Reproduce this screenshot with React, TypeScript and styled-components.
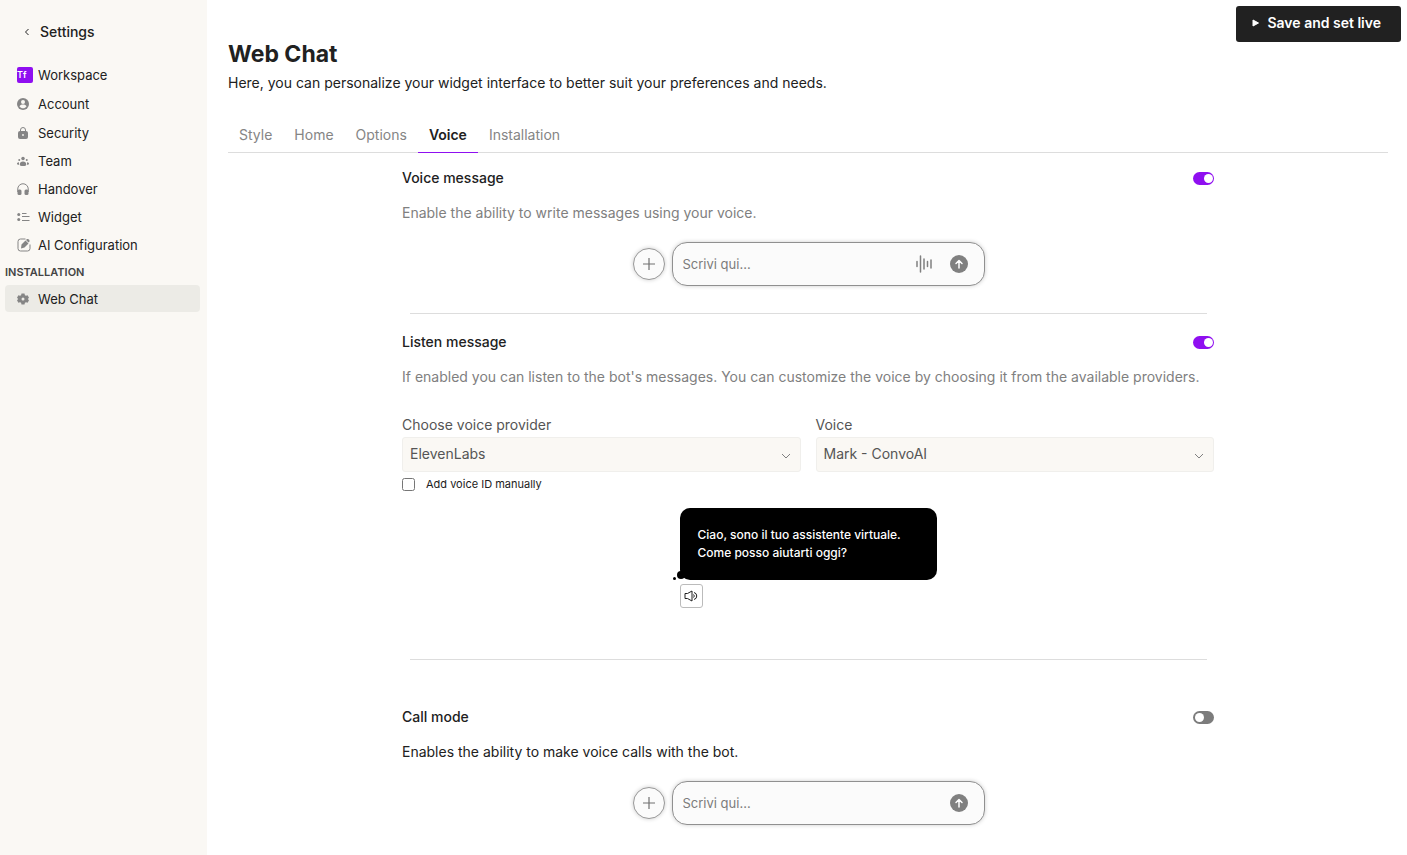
import React from "react";
import styled, { createGlobalStyle, css } from "styled-components";

const GlobalStyle = createGlobalStyle`
  *, *::before, *::after { box-sizing: border-box; }
  body {
    margin: 0;
    background: #fff;
    color: #212121;
    font-family: Inter, "Liberation Sans", sans-serif;
    font-size: 14px;
    line-height: 20px;
  }
  button, input, select { font: inherit; color: inherit; }
  h1, h2, p { margin: 0; }
`;

const Page = styled.div`
  display: flex;
  min-height: 100vh;
`;

const Sidebar = styled.aside`
  flex: 0 0 207px;
  padding: 22px 7px 20px 5px;
  background: #faf8f4;
`;

const BackLink = styled.a`
  display: flex;
  align-items: center;
  gap: 10px;
  margin-bottom: 18px;
  padding-left: 19px;
  color: #212121;
  font-weight: 500;
  text-decoration: none;
`;

const NavGroup = styled.nav`
  display: flex;
  flex-direction: column;
`;

const NavItem = styled.a<{ $tall?: boolean; $active?: boolean }>`
  display: grid;
  grid-template-columns: 16px 1fr;
  align-items: center;
  column-gap: 5px;
  height: ${(p) => (p.$tall ? 29 : p.$active ? 27 : 28)}px;
  padding-left: 12px;
  border-radius: 4px;
  background: ${(p) => (p.$active ? "#ecebe6" : "transparent")};
  color: #212121;
  font-size: 13px;
  text-decoration: none;

  svg { display: block; color: #858585; }
`;

const WorkspaceBadge = styled.span`
  width: 16px;
  height: 16px;
  border-radius: 2px;
  background: #8f0ff0;
  color: #fff;
  font-size: 9px;
  font-weight: 600;
  line-height: 16px;
`;

const GroupTitle = styled.h2`
  margin: 4px 0;
  color: #444;
  font-size: 11px;
  font-weight: 600;
  line-height: 18px;
`;

const Main = styled.main`
  flex: 1;
  min-width: 0;
`;

const Header = styled.header`
  display: flex;
  align-items: flex-start;
  justify-content: space-between;
  padding: 6px 6px 0 21px;
`;

const Heading = styled.div`
  padding-top: 32px;
`;

const Title = styled.h1`
  font-size: 23px;
  font-weight: 700;
  line-height: 32px;
`;

const Lead = styled.p`
  margin-top: 3px;
`;

const SaveButton = styled.button`
  display: flex;
  align-items: center;
  gap: 7px;
  height: 36px;
  padding: 0 20px 2px 15px;
  border: 0;
  border-radius: 3px;
  background: #212121;
  color: #fff;
  font-weight: 600;
`;

const Tabs = styled.nav`
  display: flex;
  margin: 25px 19px 0 21px;
  border-bottom: 1px solid #ddd;
`;

const Tab = styled.a<{ $active?: boolean }>`
  margin-bottom: -1px;
  padding: 7px 11px;
  color: #858585;
  text-decoration: none;
  ${(p) =>
    p.$active &&
    css`
      border-bottom: 1px solid #8f0ff0;
      color: #212121;
      font-weight: 600;
    `}
`;

const Content = styled.div`
  width: 70%;
  margin: 0 auto;
`;

const ContentFrame = styled.div`
  padding: 0 19px 30px 21px;
`;

const Section = styled.section<{ $top: number }>`
  padding-top: ${(p) => p.$top}px;
`;

const SectionHead = styled.div`
  display: flex;
  align-items: center;
  justify-content: space-between;
`;

const SectionTitle = styled.label`
  font-weight: 500;
`;

const Description = styled.p<{ $strong?: boolean }>`
  margin-top: 15px;
  color: ${(p) => (p.$strong ? "#212121" : "#808080")};
`;

const Switch = styled.input`
  appearance: none;
  display: flex;
  align-items: center;
  width: 21px;
  height: 13px;
  margin: 0;
  padding: 0 2px;
  border-radius: 7px;
  background: #7c7c7c;

  &::before {
    content: "";
    width: 9px;
    height: 9px;
    border-radius: 50%;
    background: #fff;
  }
  &:checked {
    justify-content: flex-end;
    padding-right: 1px;
    background: #8f0ff0;
  }
`;

const Divider = styled.hr`
  height: 1px;
  margin: 0 7px 0 8px;
  border: 0;
  background: #ddd;
`;

const Composer = styled.form`
  display: flex;
  align-items: center;
  justify-content: center;
  gap: 7px;
  margin: 19px 0 27px;
  padding-left: 1px;
`;

const RoundButton = styled.button`
  display: grid;
  place-items: center;
  width: 32px;
  height: 32px;
  padding: 0;
  border: 1px solid #999;
  border-radius: 50%;
  background: #fbfbfb;
  box-shadow: 0 0 4px rgba(0, 0, 0, 0.2);
  color: #707070;
`;

const Field = styled.div`
  display: flex;
  align-items: center;
  width: 313px;
  height: 44px;
  padding: 0 16px 0 10px;
  border: 1px solid #909090;
  border-radius: 15px;
  background: #fbfbfb;
  box-shadow: 0 0 4px rgba(0, 0, 0, 0.2);
`;

const FieldInput = styled.input`
  flex: 1;
  min-width: 0;
  padding: 0;
  border: 0;
  outline: 0;
  background: transparent;
  font-size: 13px;

  &::placeholder { color: #7c7c7c; opacity: 1; }
`;

const IconButton = styled.button`
  display: block;
  margin-left: 18px;
  padding: 0;
  border: 0;
  background: none;
  color: #808080;

  svg { display: block; }
`;

const SelectGrid = styled.div`
  display: grid;
  grid-template-columns: 1fr 1fr;
  gap: 15px;
  margin-top: 28px;
`;

const SelectLabel = styled.label`
  display: block;
  margin-bottom: 2px;
  color: #555;
`;

const SelectBox = styled.div`
  display: grid;
  align-items: center;

  > * { grid-area: 1 / 1; }
  svg {
    justify-self: end;
    margin: 2px 10px 0 0;
    color: #808080;
    pointer-events: none;
  }
`;

const SelectInput = styled.select`
  appearance: none;
  width: 100%;
  height: 35px;
  padding: 0 30px 1px 7px;
  border: 1px solid #f0efec;
  border-radius: 3px;
  background: #faf8f4;
  color: #555;
`;

const CheckRow = styled.label`
  display: flex;
  align-items: center;
  gap: 11px;
  margin-top: 4px;
  font-size: 11px;
  line-height: 16px;
`;

const Checkbox = styled.input`
  width: 13px;
  height: 13px;
  margin: 0;
`;

const Preview = styled.div`
  width: 257px;
  margin: 16px auto 51px;
`;

const Bubble = styled.div`
  position: relative;
  height: 72px;
  margin-bottom: 4px;
  padding: 18px;
  border-radius: 10px;
  background: #000;
  color: #fff;
  font-size: 12px;
  font-weight: 500;
  line-height: 18px;

  &::before, &::after {
    content: "";
    position: absolute;
    border-radius: 50%;
    background: #000;
  }
  &::before { left: -3px; bottom: 1px; width: 8px; height: 8px; }
  &::after { left: -7px; bottom: 0; width: 3px; height: 3px; }
`;

const SpeakerButton = styled.button`
  display: grid;
  place-items: center;
  width: 23px;
  height: 24px;
  padding: 0;
  border: 1px solid #bbb;
  border-radius: 3px;
  background: #fff;
  color: #212121;
`;

const UserIcon = () => (
  <svg width="12" height="12" viewBox="0 0 24 24">
    <circle cx="12" cy="12" r="12" fill="currentColor" />
    <circle cx="12" cy="8" r="4" fill="#faf8f4" />
    <path d="M5 17c1-3 4-4 7-4s6 1 7 4c-2 2.500-4 3.500-7 3.500s-5-1-7-3.500z" fill="#faf8f4" />
  </svg>
);

const LockIcon = () => (
  <svg width="12" height="12" viewBox="0 0 24 24">
    <path d="M7 10V6a5 5 0 0 1 10 0v4" fill="none" stroke="currentColor" strokeWidth="2" />
    <rect x="2" y="8" width="20" height="16" rx="4" fill="currentColor" />
    <circle cx="12" cy="16" r="1.800" fill="#faf8f4" />
  </svg>
);

const TeamIcon = () => (
  <svg width="12" height="12" viewBox="0 0 24 24" fill="currentColor">
    <circle cx="12" cy="7" r="3.500" />
    <circle cx="4.500" cy="10" r="2" />
    <circle cx="19.500" cy="10" r="2" />
    <path d="M5.500 19c0-4 2.500-6 6.500-6s6.500 2 6.500 6c0 2-2 3-6.500 3s-6.500-1-6.500-3z" />
    <path d="M4 14.500c-3 0-4 1.500-4 3 0 1.500 1.500 2 4 2zM20 14.500c3 0 4 1.500 4 3 0 1.500-1.500 2-4 2z" />
  </svg>
);

const HeadphonesIcon = () => (
  <svg width="12" height="12" viewBox="0 0 24 24" fill="currentColor">
    <path d="M1.500 18v-6a10.500 10.500 0 0 1 21 0v6" fill="none" stroke="currentColor" strokeWidth="2" />
    <rect x="1" y="13" width="8" height="11" rx="3" />
    <rect x="15" y="13" width="8" height="11" rx="3" />
  </svg>
);

const ListIcon = () => (
  <svg width="13" height="10" viewBox="0 0 26 20">
    <g fill="currentColor">
      <circle cx="3.500" cy="5" r="3" />
      <circle cx="3.500" cy="15" r="3" />
    </g>
    <path d="M10 3h9M10 9h15M10 17h15" stroke="currentColor" strokeWidth="2" />
  </svg>
);

const ComposeIcon = () => (
  <svg width="14" height="14" viewBox="0 0 28 28">
    <path d="M17 2H7a5 5 0 0 0-5 5v14a5 5 0 0 0 5 5h14a5 5 0 0 0 5-5V13" fill="none" stroke="currentColor" strokeWidth="2" />
    <path d="M8 21l1-8 8-8 6 6-8 8zM18 4l2-2c3-1 6 2 5 5l-2 2z" fill="currentColor" />
  </svg>
);

const GearIcon = () => (
  <svg width="12" height="12" viewBox="0 0 24 24">
    <path
      fill="currentColor"
      fillRule="evenodd"
      d="M9 1h6l.8 3.300 2.200 1.200 3.200-1 2.800 5-2.400 2.500 2.400 2.500-2.800 5-3.200-1-2.200 1.200L15 23H9l-.8-3.300L6 18.500l-3.200 1-2.800-5L2.400 12 0 9.500l2.800-5 3.200 1 2.200-1.200zM12 9a3 3 0 1 0 0 6 3 3 0 0 0 0-6z"
    />
  </svg>
);

const PlusIcon = () => (
  <svg width="12" height="12" viewBox="0 0 12 12" stroke="currentColor" strokeWidth="1.200">
    <path d="M6 0v12M0 6h12" />
  </svg>
);

const WaveIcon = () => (
  <svg width="16" height="18" viewBox="0 0 16 18" stroke="currentColor" strokeWidth="1.500" strokeLinecap="round">
    <path d="M1 6.500v5M4.500 1v16M8 4v10M11.500 6.500v5M15 5v8" />
  </svg>
);

const SendIcon = () => (
  <svg width="18" height="18" viewBox="0 0 18 18">
    <circle cx="9" cy="9" r="9" fill="currentColor" />
    <path d="M9 13V6M6 8.500l3-3 3 3" fill="none" stroke="#fff" strokeWidth="1.500" strokeLinecap="round" strokeLinejoin="round" />
  </svg>
);

const ChevronDown = () => (
  <svg width="10" height="6" viewBox="0 0 10 6">
    <path d="M1 1l4 4 4-4" fill="none" stroke="currentColor" />
  </svg>
);

const SpeakerIcon = () => (
  <svg width="14" height="12" viewBox="0 0 14 12" fill="none" stroke="currentColor" strokeLinejoin="round">
    <path d="M1 3.500h2.500L8 1v10L3.500 8.500H1z" />
    <path d="M9.500 4.500a2 2 0 0 1 0 3M10 2.500a3.600 3.600 0 0 1 0 7" />
  </svg>
);

function MessageComposer({ id, voice }: { id: string; voice?: boolean }) {
  return (
    <Composer onSubmit={(e) => e.preventDefault()}>
      <RoundButton type="button" aria-label="Aggiungi">
        <PlusIcon />
      </RoundButton>
      <Field>
        <FieldInput id={id} type="text" placeholder="Scrivi qui..." aria-label="Scrivi qui" />
        {voice && (
          <IconButton type="button" aria-label="Voce">
            <WaveIcon />
          </IconButton>
        )}
        <IconButton type="submit" aria-label="Invia">
          <SendIcon />
        </IconButton>
      </Field>
    </Composer>
  );
}

function SwitchHeader({ id, title, on }: { id: string; title: string; on?: boolean }) {
  return (
    <SectionHead>
      <SectionTitle htmlFor={id}>{title}</SectionTitle>
      <Switch id={id} type="checkbox" role="switch" defaultChecked={on} />
    </SectionHead>
  );
}

function SelectField({ id, label, value }: { id: string; label: string; value: string }) {
  return (
    <div>
      <SelectLabel htmlFor={id}>{label}</SelectLabel>
      <SelectBox>
        <SelectInput id={id} defaultValue={value}>
          <option>{value}</option>
        </SelectInput>
        <ChevronDown />
      </SelectBox>
    </div>
  );
}

const navItems = [
  { label: "Workspace", icon: <WorkspaceBadge>Tf</WorkspaceBadge>, tall: true },
  { label: "Account", icon: <UserIcon />, tall: true },
  { label: "Security", icon: <LockIcon />, tall: true },
  { label: "Team", icon: <TeamIcon /> },
  { label: "Handover", icon: <HeadphonesIcon /> },
  { label: "Widget", icon: <ListIcon /> },
  { label: "AI Configuration", icon: <ComposeIcon /> },
];

const tabs = ["Style", "Home", "Options", "Voice", "Installation"];

export default function App() {
  return (
    <Page>
      <GlobalStyle />
      <Sidebar>
        <BackLink href="#back">
          <svg width="6" height="8" viewBox="0 0 6 8">
            <path d="M4.500 1L1.500 4l3 3" fill="none" stroke="#212121" />
          </svg>
          Settings
        </BackLink>
        <NavGroup>
          {navItems.map((item) => (
            <NavItem key={item.label} href="#" $tall={item.tall}>
              {item.icon}
              {item.label}
            </NavItem>
          ))}
        </NavGroup>
        <GroupTitle>INSTALLATION</GroupTitle>
        <NavGroup>
          <NavItem href="#" $active>
            <GearIcon />
            Web Chat
          </NavItem>
        </NavGroup>
      </Sidebar>

      <Main>
        <Header>
          <Heading>
            <Title>Web Chat</Title>
            <Lead>Here, you can personalize your widget interface to better suit your preferences and needs.</Lead>
          </Heading>
          <SaveButton type="button">
            <svg width="9" height="8" viewBox="0 0 9 8">
              <path d="M2 1v6l5.500-3z" fill="#fff" stroke="#fff" strokeLinejoin="round" />
            </svg>
            Save and set live
          </SaveButton>
        </Header>

        <Tabs>
          {tabs.map((tab) => (
            <Tab key={tab} href="#" $active={tab === "Voice"}>
              {tab}
            </Tab>
          ))}
        </Tabs>

        <ContentFrame>
          <Content>
            <Section $top={15}>
              <SwitchHeader id="voice-message" title="Voice message" on />
              <Description>Enable the ability to write messages using your voice.</Description>
              <MessageComposer id="voice-composer" voice />
            </Section>
            <Divider />
            <Section $top={18}>
              <SwitchHeader id="listen-message" title="Listen message" on />
              <Description>
                If enabled you can listen to the bot's messages. You can customize the voice by choosing it from the
                available providers.
              </Description>
              <SelectGrid>
                <SelectField id="provider" label="Choose voice provider" value="ElevenLabs" />
                <SelectField id="voice" label="Voice" value="Mark - ConvoAI" />
              </SelectGrid>
              <CheckRow>
                <Checkbox type="checkbox" />
                Add voice ID manually
              </CheckRow>
              <Preview>
                <Bubble>
                  Ciao, sono il tuo assistente virtuale.
                  <br />
                  Come posso aiutarti oggi?
                </Bubble>
                <SpeakerButton type="button" aria-label="Ascolta">
                  <SpeakerIcon />
                </SpeakerButton>
              </Preview>
            </Section>
            <Divider />
            <Section $top={47}>
              <SwitchHeader id="call-mode" title="Call mode" />
              <Description $strong>Enables the ability to make voice calls with the bot.</Description>
              <MessageComposer id="call-composer" />
            </Section>
          </Content>
        </ContentFrame>
      </Main>
    </Page>
  );
}
